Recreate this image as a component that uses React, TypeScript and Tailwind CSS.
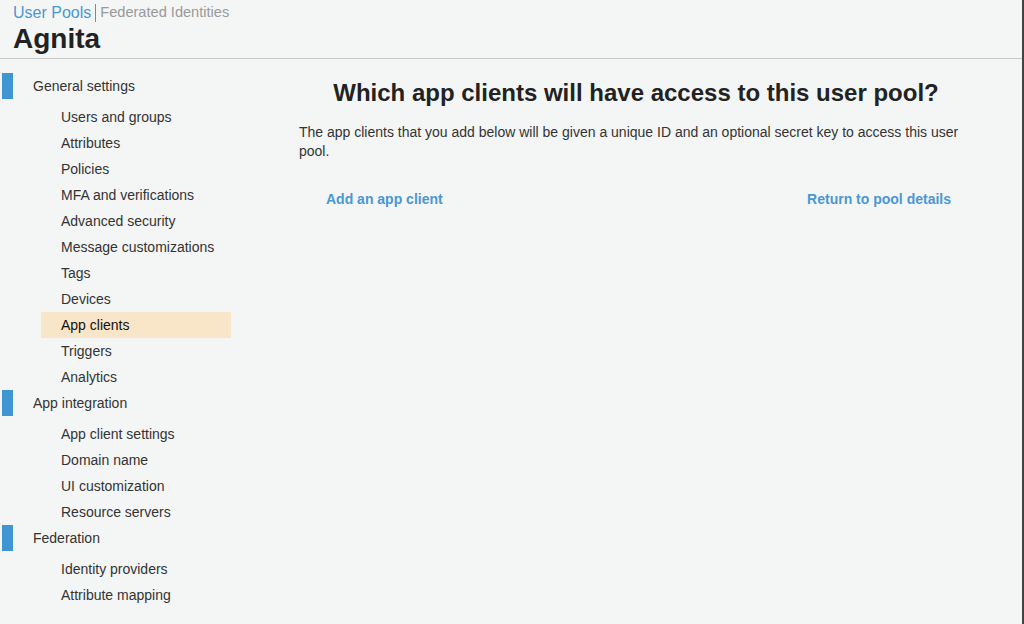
import React from "react";

const sections = [
  {
    title: "General settings",
    items: [
      "Users and groups",
      "Attributes",
      "Policies",
      "MFA and verifications",
      "Advanced security",
      "Message customizations",
      "Tags",
      "Devices",
      "App clients",
      "Triggers",
      "Analytics",
    ],
  },
  {
    title: "App integration",
    items: ["App client settings", "Domain name", "UI customization", "Resource servers"],
  },
  { title: "Federation", items: ["Identity providers", "Attribute mapping"] },
];

export default function App() {
  return (
    <div
      className="w-[1024px] h-[624px] bg-[#f4f6f6] text-[#333] overflow-hidden border-r-2 border-[#444]"
      style={{ fontFamily: '"Liberation Sans", Arial, sans-serif' }}
    >
      <div className="px-[13px] pt-[3px] h-[59px] border-b border-[#c8c8c8]">
        <div className="flex items-center text-[16px] leading-[19px]">
          <span className="text-[#4a97d4]">User Pools</span>
          <span className="mx-[4px] w-px h-[18px] bg-[#888]" />
          <span className="text-[#999] text-[14.6px]">Federated Identities</span>
        </div>
        <div className="text-[28px] font-bold leading-[34px] text-[#222]">Agnita</div>
      </div>
      <div className="flex">
        <div className="w-[260px] pt-[14px] text-[14px]">
          {sections.map((s) => (
            <div key={s.title}>
              <div className="flex items-center h-[26px]">
                <div className="ml-[2px] w-[11px] h-[26px] bg-[#3f96d3]" />
                <div className="ml-[20px] text-[#333]">{s.title}</div>
              </div>
              <div className="pt-[5px]">
                {s.items.map((it) => (
                  <div
                    key={it}
                    className={
                      "ml-[41px] w-[190px] h-[26px] flex items-center pl-[20px] " +
                      (it === "App clients" ? "bg-[#f9e5c8] text-[#111]" : "text-[#333]")
                    }
                  >
                    {it}
                  </div>
                ))}
              </div>
            </div>
          ))}
        </div>
        <div className="ml-[39px] w-[674px] pt-[19px]">
          <h1 className="text-center text-[24px] font-bold text-[#222] leading-[30px]">
            Which app clients will have access to this user pool?
          </h1>
          <p className="mt-[15px] text-[14px] leading-[19px] text-[#333]">
            The app clients that you add below will be given a unique ID and an optional secret key to access this user
            pool.
          </p>
          <div className="mt-[28px] flex justify-between pl-[27px] pr-[22px] text-[14px] font-bold text-[#4a97d4]">
            <span>Add an app client</span>
            <span>Return to pool details</span>
          </div>
        </div>
      </div>
    </div>
  );
}
